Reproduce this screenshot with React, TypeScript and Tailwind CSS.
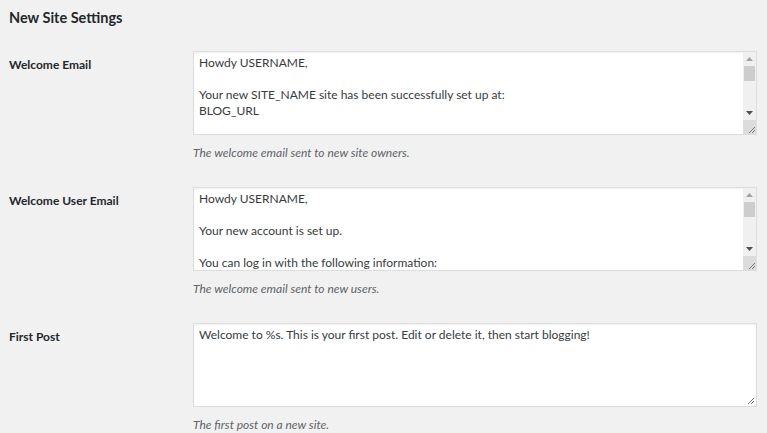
import React from "react";

interface settingType {
  label: string;
  lines: string[];
  note: string;
  scroll: boolean;
}

const settings: settingType[] = [
  {
    label: "Welcome Email",
    lines: [
      "Howdy USERNAME,",
      "",
      "Your new SITE_NAME site has been successfully set up at:",
      "BLOG_URL",
    ],
    note: "The welcome email sent to new site owners.",
    scroll: true,
  },
  {
    label: "Welcome User Email",
    lines: [
      "Howdy USERNAME,",
      "",
      "Your new account is set up.",
      "",
      "You can log in with the following information:",
    ],
    note: "The welcome email sent to new users.",
    scroll: true,
  },
  {
    label: "First Post",
    lines: [
      "Welcome to %s. This is your first post. Edit or delete it, then start blogging!",
    ],
    note: "The first post on a new site.",
    scroll: false,
  },
];

function Grip() {
  return (
    <svg width="9" height="9" viewBox="0 0 9 9" className="block">
      <path d="M8 2 L2 8 M8 5 L5 8" stroke="#7a7a7a" strokeWidth="1" fill="none" />
    </svg>
  );
}

function Scrollbar() {
  return (
    <div className="flex flex-col w-[13px] bg-[#f0f0f0]">
      <div className="h-[14px] flex items-center justify-center">
        <svg width="7" height="4" viewBox="0 0 7 4">
          <path d="M0 4 L3.5 0 L7 4 Z" fill="#a3a3a3" />
        </svg>
      </div>
      <div className="flex-1 px-[1px]">
        <div className="h-[15px] bg-[#cdcdcd]" />
      </div>
      <div className="h-[14px] flex items-center justify-center">
        <svg width="7" height="4" viewBox="0 0 7 4">
          <path d="M0 0 L7 0 L3.5 4 Z" fill="#505050" />
        </svg>
      </div>
      <div className="h-[14px] bg-[#dcdcdc] flex items-end justify-end">
        <Grip />
      </div>
    </div>
  );
}

function FakeTextarea({ lines, scroll }: { lines: string[]; scroll: boolean }) {
  return (
    <div className="flex h-[84px] bg-white border border-[#dedede] shadow-[inset_0_1px_2px_rgba(0,0,0,0.07),0_0_1px_rgba(0,0,0,0.04)]">
      <div className="flex-1 overflow-hidden px-[5px] pt-[3px] text-[12px] leading-[16px] text-[#373c41]">
        {lines.map((line, index) => (
          <div key={index} className="h-[16px] whitespace-nowrap">
            {line}
          </div>
        ))}
      </div>
      {scroll ? (
        <Scrollbar />
      ) : (
        <div className="flex items-end pr-[1px] pb-[1px]">
          <Grip />
        </div>
      )}
    </div>
  );
}

export default function App() {
  return (
    <div
      className="min-h-screen bg-[#f1f1f1] pl-[9px] pr-[10px] pt-[8px] text-[#23282d]"
      style={{ fontFamily: 'Lato, "Noto Sans", sans-serif' }}
    >
      <h2 className="text-[14.5px] font-bold leading-[20px]">New Site Settings</h2>
      <div className="mt-[23px] flex flex-col gap-[26px]">
        {settings.map((s) => (
          <div key={s.label} className="flex">
            <div className="w-[184px] shrink-0 pt-[6px] text-[12px] font-bold leading-[16px]">
              {s.label}
            </div>
            <div className="flex-1">
              <FakeTextarea lines={s.lines} scroll={s.scroll} />
              <p className="mt-[10px] text-[12px] italic leading-[16px] text-[#5f646a]">
                {s.note}
              </p>
            </div>
          </div>
        ))}
      </div>
    </div>
  );
}
